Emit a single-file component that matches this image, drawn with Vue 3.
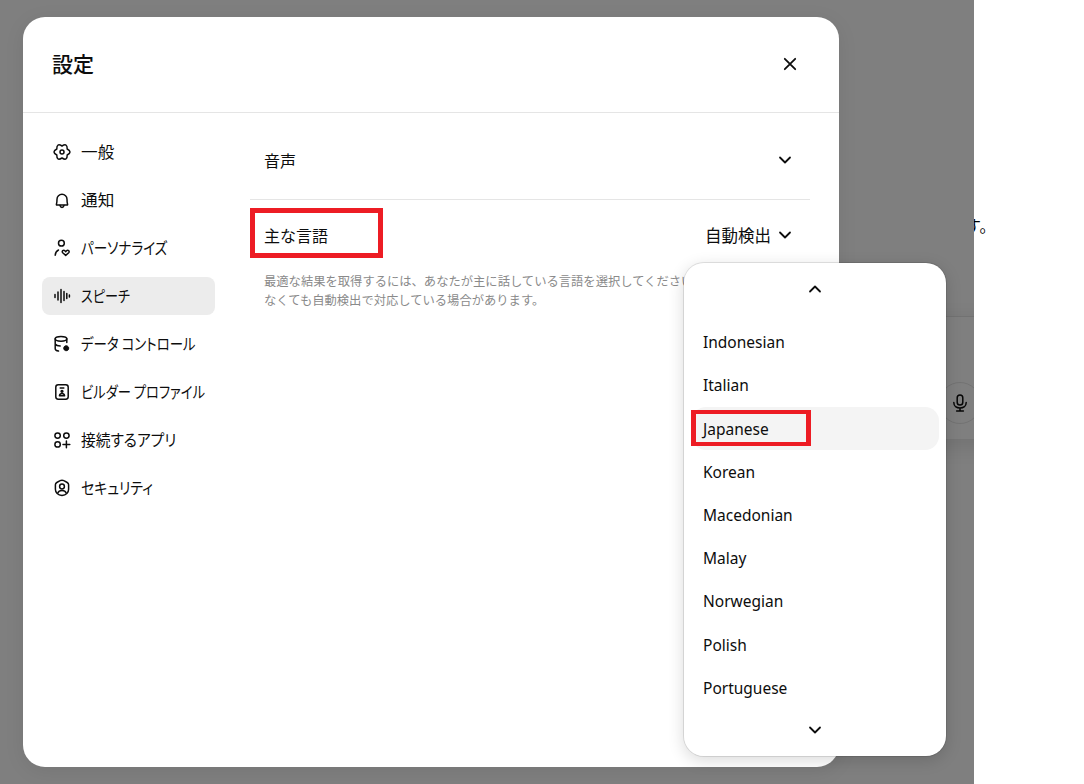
<script setup>
const nav = [
  { key: 'gear', label: '一般', sx: 1.04 },
  { key: 'bell', label: '通知', sx: 1.04 },
  { key: 'person', label: 'パーソナライズ', sx: 0.85 },
  { key: 'speech', label: 'スピーチ', sx: 0.82, active: true },
  { key: 'data', label: 'データ コントロール', sx: 0.84 },
  { key: 'builder', label: 'ビルダー プロファイル', sx: 0.83 },
  { key: 'apps', label: '接続するアプリ', sx: 0.92 },
  { key: 'shield', label: 'セキュリティ', sx: 0.87 },
]
const langs = ['Indonesian', 'Italian', 'Japanese', 'Korean', 'Macedonian', 'Malay', 'Norwegian', 'Polish', 'Portuguese']
</script>

<template>
  <div class="page">
    <div class="main">
      <div class="composer">
        <span class="mic">
          <svg width="20" height="20" viewBox="0 0 20 20" fill="none" stroke="currentColor" stroke-width="1.5" stroke-linecap="round">
            <rect x="7.200" y="2" width="5.600" height="10" rx="2.800" />
            <path d="M3.800 9.600c0 3.400 2.800 5.400 6.200 5.400s6.200-2 6.200-5.400M10 15v3M6.600 18h6.800" />
          </svg>
        </span>
      </div>
      <div class="overlay"></div>

      <section class="dialog">
        <header class="head">
          <h2 class="title">設定</h2>
          <svg class="close" width="20" height="20" viewBox="0 0 20 20" fill="none" stroke="currentColor" stroke-width="1.800" stroke-linecap="round">
            <path d="M4.800 4.800l10.400 10.400M15.200 4.800L4.800 15.200" />
          </svg>
        </header>
        <div class="body">
          <nav class="side">
            <div v-for="n in nav" :key="n.key" class="nav" :class="{ active: n.active }">
              <svg class="ico" width="20" height="20" viewBox="0 0 20 20" fill="none" stroke="currentColor" stroke-width="1.500" stroke-linecap="round" stroke-linejoin="round">
                <template v-if="n.key === 'gear'">
                  <path d="M10 4Q15.400 .65 15.200 7Q20.800 10 15.200 13Q15.400 19.350 10 16Q4.600 19.350 4.800 13Q-.8 10 4.800 7Q4.600 .65 10 4Z" />
                  <circle cx="10" cy="10" r="2" />
                </template>
                <template v-else-if="n.key === 'bell'">
                  <path d="M4.400 14.500c.3-.9.600-2 .600-5.200a5 5 0 0 1 10 0c0 3.200.3 4.300.6 5.200.1.300-.1.600-.4.600H4.800c-.3 0-.5-.3-.4-.6z" />
                  <path d="M8 15.500c.3 1.200 1 1.900 2 1.900s1.700-.7 2-1.900" />
                </template>
                <template v-else-if="n.key === 'person'">
                  <circle cx="9.400" cy="5.200" r="2.900" />
                  <path d="M3.200 17.200c.2-2.400 1.300-4.300 3.300-5.200" />
                  <path d="M13.700 17.400l-3-2.700c-1.400-1.400.8-3.400 2.200-1.900l.8.800.8-.8c1.400-1.500 3.600.5 2.200 1.900z" />
                </template>
                <template v-else-if="n.key === 'speech'">
                  <path d="M3 8.500v3M6 6v8M9 3.500v13M12 5.500v9M14.800 7.500v5M17.400 9v2" />
                </template>
                <template v-else-if="n.key === 'data'">
                  <ellipse cx="9" cy="4.800" rx="5.800" ry="2.400" />
                  <path d="M3.200 4.800v10c0 1.300 1.300 2 3.300 2.300M14.800 4.800v3.700M3.200 10c.8 1.200 2.800 1.900 5 2" />
                  <circle cx="14.200" cy="14.200" r="2.500" fill="currentColor" stroke-width="1" stroke-dasharray="1.500 .9" />
                </template>
                <template v-else-if="n.key === 'builder'">
                  <rect x="3.800" y="2.800" width="12.400" height="14.400" rx="2.400" />
                  <path d="M8.200 6h3.600" />
                  <circle cx="10" cy="9.300" r=".9" />
                  <path d="M7.400 13.800c.3-1.500 1.300-2.200 2.600-2.200s2.300.7 2.600 2.200z" />
                </template>
                <template v-else-if="n.key === 'apps'">
                  <circle cx="5.600" cy="5.600" r="2.700" />
                  <circle cx="14.400" cy="5.600" r="2.700" />
                  <circle cx="5.600" cy="14.400" r="2.700" />
                  <path d="M14.400 11v6.800M11 14.400h6.800" />
                </template>
                <template v-else>
                  <path d="M8.100 2.700c1.200-.7 2.600-.7 3.800 0l3.300 1.800c.9.500 1.400 1.400 1.400 2.300v4.500c0 3.200-2.500 5.900-6.600 6.200-4.100-.3-6.600-3-6.600-6.200V6.800c0-.9.500-1.800 1.400-2.300z" />
                  <circle cx="10" cy="8.500" r="2.400" />
                  <path d="M5.800 15c.6-1.700 2.200-2.600 4.200-2.600s3.600.9 4.200 2.600" />
                </template>
              </svg>
              <span class="nav-label" :style="{ transform: `scaleX(${n.sx})` }">{{ n.label }}</span>
            </div>
          </nav>

          <div class="content">
            <div class="row first">
              <span>音声</span>
              <svg class="chev" width="16" height="16" viewBox="0 0 16 16" fill="none" stroke="currentColor" stroke-width="1.800" stroke-linecap="round" stroke-linejoin="round"><path d="M3 5.500l5 5 5-5" /></svg>
            </div>
            <div class="row second">
              <span>主な言語</span>
              <span class="value">
                自動検出
                <svg class="chev" width="16" height="16" viewBox="0 0 16 16" fill="none" stroke="currentColor" stroke-width="1.800" stroke-linecap="round" stroke-linejoin="round"><path d="M3 5.500l5 5 5-5" /></svg>
              </span>
            </div>
            <p class="desc">最適な結果を取得するには、あなたが主に話している言語を選択してください。リストに記載されてい<br />なくても自動検出で対応している場合があります。</p>
          </div>
        </div>
      </section>

      <div class="mark mark-a"></div>

      <div class="menu">
        <div class="arrow up">
          <svg width="16" height="16" viewBox="0 0 16 16" fill="none" stroke="currentColor" stroke-width="1.800" stroke-linecap="round" stroke-linejoin="round"><path d="M3 10.500l5-5 5 5" /></svg>
        </div>
        <div class="list">
          <div v-for="l in langs" :key="l" class="opt" :class="{ sel: l === 'Japanese' }">{{ l }}</div>
        </div>
        <div class="arrow down">
          <svg width="16" height="16" viewBox="0 0 16 16" fill="none" stroke="currentColor" stroke-width="1.800" stroke-linecap="round" stroke-linejoin="round"><path d="M3 5.500l5 5 5-5" /></svg>
        </div>
      </div>

      <div class="mark mark-b"></div>
    </div>
    <div class="rest"><span class="peek">す。</span></div>
  </div>
</template>

<style>
html, body { margin: 0; background: #fff; }
</style>

<style scoped>
.page {
  display: flex;
  width: 1084px;
  height: 784px;
  overflow: hidden;
  background: #fff;
  color: #0d0d0d;
  font-family: "Noto Sans CJK JP", "Noto Sans", sans-serif;
  font-size: 16px;
}
.main {
  position: relative;
  z-index: 1;
  flex: 0 0 974px;
  height: 784px;
  overflow: hidden;
  background: #fff;
}
.rest {
  flex: 1;
  padding-top: 213px;
  white-space: nowrap;
}
.peek {
  display: block;
  margin-left: -9px;
  font-size: 16px;
  line-height: 24px;
  color: #000;
}
.composer {
  position: absolute;
  left: 300px;
  top: 316px;
  width: 800px;
  height: 123px;
  box-sizing: border-box;
  border-top: 1px solid #e5e5e5;
  box-shadow: 0 6px 24px rgba(0, 0, 0, .12);
  background: #fff;
}
.mic {
  position: absolute;
  left: 639px;
  top: 65px;
  width: 42px;
  height: 42px;
  box-sizing: border-box;
  border: 1px solid #e5e5e5;
  border-radius: 50%;
  display: flex;
  align-items: center;
  justify-content: center;
}
.overlay {
  position: absolute;
  inset: 0;
  background: rgba(0, 0, 0, .5);
}
.dialog {
  position: absolute;
  left: 23px;
  top: 17px;
  width: 816px;
  height: 750px;
  background: #fff;
  border-radius: 22px;
  box-shadow: 0 4px 20px rgba(0, 0, 0, .08);
  display: flex;
  flex-direction: column;
}
.head {
  flex: 0 0 96px;
  box-sizing: border-box;
  display: flex;
  align-items: center;
  justify-content: space-between;
  padding: 0 39px 2px 29px;
  border-bottom: 1px solid #e5e5e5;
}
.title {
  margin: -1px 0 0;
  font-size: 21px;
  font-weight: 500;
  line-height: 28px;
}
.close { display: block; }
.body {
  flex: 1;
  display: flex;
  min-height: 0;
}
.side {
  flex: 0 0 173px;
  min-width: 0;
  margin-left: 19px;
  padding-top: 20px;
  display: flex;
  flex-direction: column;
  gap: 10px;
}
.nav {
  height: 38px;
  display: flex;
  align-items: center;
  gap: 9px;
  padding-left: 10px;
  border-radius: 8px;
  font-size: 16px;
  font-feature-settings: "palt";
  white-space: nowrap;
}
.nav.active { background: #ececec; }
.nav-label {
  display: inline-block;
  padding-bottom: 3px;
  transform-origin: left center;
}
.ico { flex: none; display: block; }
.content {
  flex: 0 0 560px;
  min-width: 0;
  margin-left: 35px;
}
.row {
  display: flex;
  align-items: center;
  justify-content: space-between;
  padding: 0 17px 0 14px;
}
.row.first {
  height: 87px;
  border-bottom: 1px solid #e5e5e5;
  padding-top: 8px;
  box-sizing: border-box;
}
.row.second { height: 70px; }
.value {
  display: flex;
  align-items: center;
  gap: 6px;
  font-size: 16.500px;
}
.chev { display: block; }
.desc {
  margin: 0;
  padding: 2px 0 0 14px;
  font-size: 12.300px;
  line-height: 19px;
  color: #8a8a8a;
  white-space: nowrap;
}
.menu {
  position: absolute;
  left: 683px;
  top: 262px;
  width: 264px;
  height: 495px;
  box-sizing: border-box;
  padding: 0 7px;
  background: #fff;
  border: 1px solid rgba(0, 0, 0, .1);
  background-clip: padding-box;
  border-radius: 21px;
  box-shadow: 0 4px 16px rgba(0, 0, 0, .14);
  display: flex;
  flex-direction: column;
}
.arrow {
  display: flex;
  justify-content: center;
  color: #0d0d0d;
}
.arrow.up { height: 57.700px; padding-top: 18px; box-sizing: border-box; }
.arrow.down { padding-top: 13px; }
.list { padding-left: 1px; }
.opt {
  height: 43.200px;
  display: flex;
  align-items: center;
  padding-left: 11px;
  border-radius: 14px;
  font-family: "Noto Sans", sans-serif;
  font-size: 15.500px;
  color: #0d0d0d;
}
.opt.sel { background: #f4f4f4; }
.mark {
  position: absolute;
  box-sizing: border-box;
  border-style: solid;
  border-color: #ed1c24;
  pointer-events: none;
}
.mark-a { left: 250px; top: 208px; width: 133px; height: 50px; border-width: 5px; }
.mark-b { left: 691px; top: 410px; width: 120px; height: 36px; border-width: 4px 5px; }
</style>
